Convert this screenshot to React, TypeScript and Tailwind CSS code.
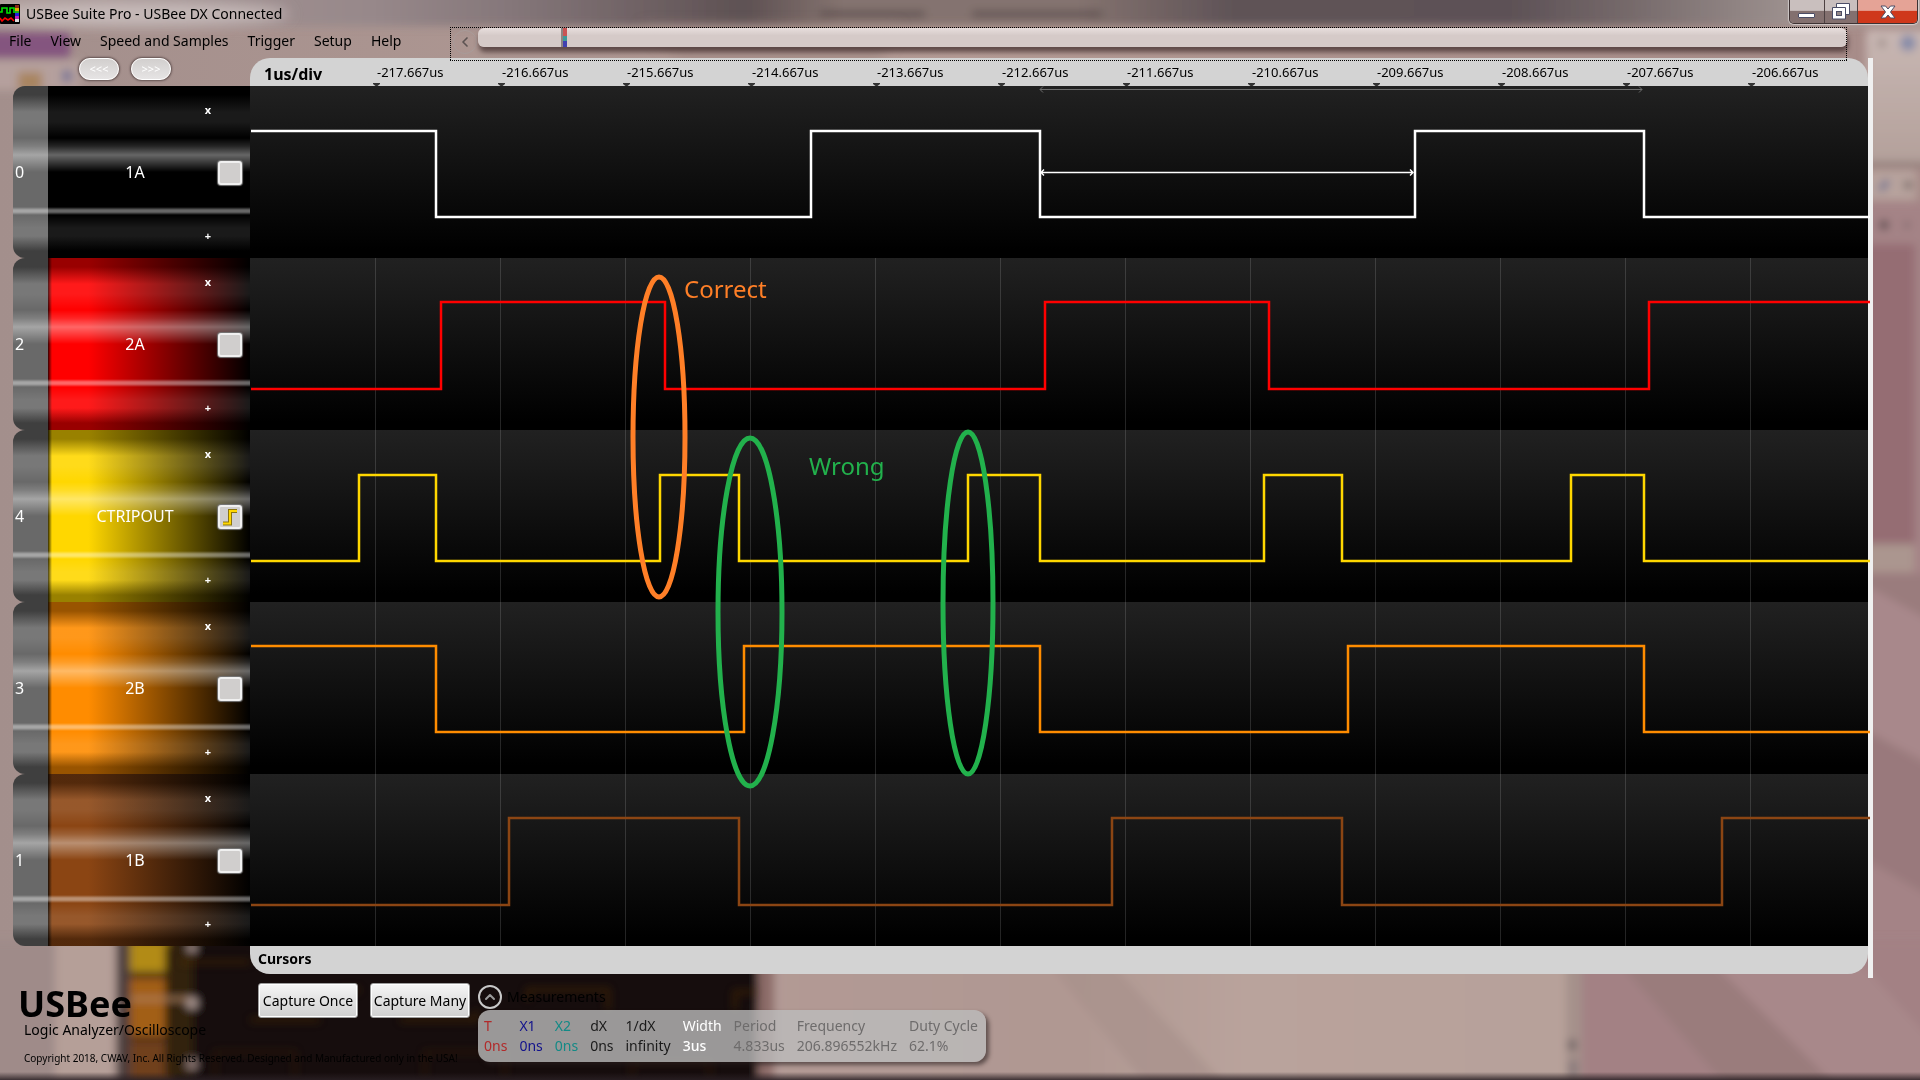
import { ChevronLeft, ChevronUp } from "lucide-react";

type Channel = {
  pin: number;
  name: string;
  fill: string;
  color: string;
  high: number;
  low: number;
  startsHigh: boolean;
  edges: number[];
  trigger?: boolean;
};

const PLOT_WIDTH = 1618;
const ROW_HEIGHT = 172;

const channels: Channel[] = [
  {
    pin: 0,
    name: "1A",
    fill: "from-black",
    color: "#ffffff",
    high: 45,
    low: 131,
    startsHigh: true,
    edges: [186, 561, 790, 1165, 1394],
  },
  {
    pin: 2,
    name: "2A",
    fill: "from-[#ff0000]",
    color: "#ff0000",
    high: 44,
    low: 131,
    startsHigh: false,
    edges: [191, 415, 795, 1019, 1399],
  },
  {
    pin: 4,
    name: "CTRIPOUT",
    fill: "from-[#ffd700]",
    color: "#ffd700",
    high: 45,
    low: 131,
    startsHigh: false,
    edges: [109, 186, 410, 489, 718, 790, 1014, 1092, 1321, 1394],
    trigger: true,
  },
  {
    pin: 3,
    name: "2B",
    fill: "from-[#ff8c00]",
    color: "#ff8c00",
    high: 44,
    low: 130,
    startsHigh: true,
    edges: [186, 494, 790, 1098, 1394],
  },
  {
    pin: 1,
    name: "1B",
    fill: "from-[#8b4513]",
    color: "#8b4513",
    high: 44,
    low: 131,
    startsHigh: false,
    edges: [259, 489, 862, 1092, 1472],
  },
];

const ticks = [
  "-217.667us",
  "-216.667us",
  "-215.667us",
  "-214.667us",
  "-213.667us",
  "-212.667us",
  "-211.667us",
  "-210.667us",
  "-209.667us",
  "-208.667us",
  "-207.667us",
  "-206.667us",
];

const measurements = [
  { label: "T", value: "0ns", style: "text-[#b22a2a]" },
  { label: "X1", value: "0ns", style: "text-[#12128c]" },
  { label: "X2", value: "0ns", style: "text-[#138a86]" },
  { label: "dX", value: "0ns", style: "text-[#1a1a1a]" },
  { label: "1/dX", value: "infinity", style: "text-[#1a1a1a]" },
  { label: "Width", value: "3us", style: "text-white font-medium" },
  { label: "Period", value: "4.833us", style: "text-[#6e6c6c]" },
  { label: "Frequency", value: "206.896552kHz", style: "text-[#6e6c6c]" },
  { label: "Duty Cycle", value: "62.1%", style: "text-[#6e6c6c]" },
];

function wavePath({ high, low, startsHigh, edges }: Channel) {
  let level = startsHigh ? high : low;
  let d = `M1 ${level}`;
  for (const x of edges) {
    level = level === high ? low : high;
    d += `H${x}V${level}`;
  }
  return `${d}H1620`;
}

/* Blurred glass showing the desktop behind the window */
function Backdrop() {
  return (
    <svg
      className="absolute inset-0 h-full w-full"
      viewBox="0 0 1920 1080"
      preserveAspectRatio="none"
      aria-hidden="true"
    >
      <defs>
        <linearGradient id="glass" x1="0" x2="1" y1="0" y2="0">
          <stop offset="0" stopColor="#a38f8c" />
          <stop offset="0.5" stopColor="#b59c96" />
          <stop offset="1" stopColor="#a68b88" />
        </linearGradient>
        <linearGradient id="titlebar" x1="0" x2="1" y1="0" y2="0">
          <stop offset="0" stopColor="#ad9c9a" />
          <stop offset="0.2" stopColor="#97888a" />
          <stop offset="0.27" stopColor="#85777a" />
          <stop offset="0.39" stopColor="#5e5153" />
          <stop offset="0.44" stopColor="#84736f" />
          <stop offset="0.56" stopColor="#84736f" />
          <stop offset="0.64" stopColor="#5f5357" />
          <stop offset="0.78" stopColor="#5d5156" />
          <stop offset="0.84" stopColor="#75696a" />
          <stop offset="0.95" stopColor="#a99d9a" />
          <stop offset="1" stopColor="#b5a5a1" />
        </linearGradient>
        <linearGradient id="rightEdge" x1="0" x2="0" y1="0" y2="1">
          <stop offset="0" stopColor="#c8b7b3" />
          <stop offset="1" stopColor="#b3a09a" />
        </linearGradient>
        <linearGradient id="tan" x1="0" x2="1" y1="0" y2="0">
          <stop offset="0" stopColor="#b29a95" />
          <stop offset="0.4" stopColor="#b09892" />
          <stop offset="0.6" stopColor="#b9a39c" />
          <stop offset="1" stopColor="#b7a19a" />
        </linearGradient>
        <linearGradient id="bottomEdge" x1="0" x2="0" y1="0" y2="1">
          <stop offset="0" stopColor="#2a2024" stopOpacity="0" />
          <stop offset="1" stopColor="#2a2024" stopOpacity="0.85" />
        </linearGradient>
        <filter id="soft">
          <feGaussianBlur stdDeviation="4" />
        </filter>
        <filter id="softer" x="-20%" y="-20%" width="140%" height="140%">
          <feGaussianBlur stdDeviation="7" />
        </filter>
      </defs>
      <rect width="1920" height="1080" fill="url(#glass)" />
      <g filter="url(#soft)">
        <rect x="-20" y="-20" width="1960" height="46" fill="url(#titlebar)" />
        <rect x="820" y="11" width="105" height="6" fill="#4f4344" opacity="0.7" />
        <rect x="972" y="11" width="130" height="6" fill="#4f4344" opacity="0.7" />
        <rect x="-20" y="32" width="90" height="26" fill="#84557f" />
        <rect x="-20" y="60" width="100" height="30" fill="#b5a09d" />
        <rect x="18" y="72" width="24" height="18" fill="#a98561" />
        <rect x="62" y="70" width="10" height="12" fill="#7d7896" />
      </g>
      <g filter="url(#softer)">
        <ellipse cx="140" cy="14" rx="150" ry="12" fill="#d2c7c5" opacity="0.75" />
        <path d="M640 26h260l-20 34h-200z" fill="#9d8580" opacity="0.6" />
      </g>
      <g filter="url(#soft)">
        <rect x="1866" y="30" width="70" height="136" fill="url(#rightEdge)" />
        <circle cx="1908" cy="43" r="8" fill="#8389a8" />
        <circle cx="1882" cy="43" r="4" fill="#998985" />
        <rect x="1866" y="162" width="70" height="5" fill="#8d7976" />
        <rect x="1866" y="170" width="50" height="30" fill="#b7a39d" />
        <path d="M1880 190l8-9" stroke="#6f7191" strokeWidth="6" />
        <circle cx="1908" cy="185" r="4" fill="#6d605d" />
        <rect x="1866" y="202" width="70" height="900" fill="#a48386" />
        <circle cx="1884" cy="225" r="5" fill="#5f4d50" />
        <circle cx="1907" cy="225" r="4" fill="#8b7074" />
        <rect x="1860" y="244" width="55" height="300" fill="#956d73" />
        <path d="M1860 574h76v50l-76-42z" fill="#9a7b7d" />
        <rect x="1860" y="544" width="54" height="28" fill="#ab968f" />
        <path d="M1860 582l76 42v140l-76-34z" fill="#a8888b" />
        <path d="M1866 730l70 40v130l-70-40z" fill="#99797c" />
      </g>
      <g filter="url(#soft)">
        <rect x="-20" y="940" width="75" height="160" fill="#9f8b89" />
        <rect x="55" y="940" width="62" height="160" fill="#b59f98" />
        <rect x="750" y="940" width="830" height="160" fill="url(#tan)" />
        <path d="M1030 940h60l140 150h-80z" fill="#a8918b" opacity="0.7" />
        <rect x="1566" y="950" width="16" height="140" fill="#a5918b" />
        <rect x="1568" y="1040" width="8" height="10" fill="#6c6062" />
        <rect x="1569" y="1060" width="8" height="18" fill="#857779" />
        <rect x="1582" y="940" width="360" height="160" fill="#a38184" />
        <path d="M1600 940h90l150 150h-110z" fill="#9a7b7c" />
        <path d="M1690 940h150l100 110v50h-90z" fill="#a8888a" />
        <rect x="752" y="960" width="22" height="130" fill="#8c6c68" />
        <rect x="116" y="930" width="642" height="170" fill="#120e0f" />
        <rect x="116" y="930" width="14" height="170" fill="#4c3d3d" />
        <rect x="130" y="940" width="40" height="32" fill="#b28b18" />
        <rect x="130" y="978" width="40" height="58" fill="#a25f17" />
        <rect x="130" y="1040" width="40" height="50" fill="#70411f" />
        <path d="M165 944h28v134h-28z" fill="#33200f" />
        <path d="M130 999h60" stroke="#b58a66" strokeWidth="3" />
        <circle cx="192" cy="948" r="5" fill="#a08b86" />
        <circle cx="192" cy="1003" r="6" fill="#a99590" />
        <circle cx="192" cy="1064" r="6" fill="#8b7773" />
      </g>
      <g filter="url(#soft)" stroke="#55300e" strokeWidth="4" fill="none" opacity="0.6">
        <path d="M180 962h70M340 990h20M250 1020h70M400 1020h76V1010M528 1000v-10h80v20M735 1010v-18h20" />
        <path d="M215 1078v-26h80v26M425 1078v-26h80v26M632 1078v-16h78v16" opacity="0.5" />
      </g>
      <rect y="1072" width="1920" height="8" fill="url(#bottomEdge)" />
    </svg>
  );
}

function AppIcon() {
  return (
    <svg className="h-5 w-5 shrink-0" viewBox="0 0 20 20" aria-hidden="true">
      <rect width="20" height="20" rx="1" fill="#000" />
      <path d="M0 8h2V4h5v5h3V4h4v5" stroke="#00e000" strokeWidth="1.6" fill="none" />
      <path d="M0 14l2 3 3-3 3 2 3-2 3 3" stroke="#f00" strokeWidth="1.6" fill="none" />
      <rect x="15" y="1" width="4" height="3" fill="#8b2a1a" />
      <rect x="15" y="4" width="4" height="3" fill="#e0b000" />
      <rect x="15" y="7" width="4" height="2" fill="#20b020" />
      <rect x="15" y="9" width="4" height="3" fill="#2020e0" />
      <rect x="15" y="12" width="4" height="3" fill="#c020c0" />
      <rect x="15" y="15" width="4" height="3" fill="#ddd" />
    </svg>
  );
}

function TitleBar() {
  return (
    <header className="flex h-[27px] items-start justify-between">
      <div className="flex h-[27px] items-center gap-[6px]">
        <AppIcon />
        <h1 className="text-sm">USBee Suite Pro - USBee DX Connected</h1>
      </div>
      <div className="mr-[2px] flex h-6 overflow-hidden rounded-b-[5px] border border-t-0 border-[#3d3233] shadow-[0_0_1px_1px_rgba(255,255,255,0.5)]">
        <button
          aria-label="Minimize"
          className="flex w-[35px] items-center justify-center border-r border-[#4d4142] bg-linear-to-b/srgb from-[#c9bfbe] from-45% to-[#83706f] to-50% pt-2"
        >
          <svg className="h-[6px] w-[18px]" viewBox="0 0 18 6">
            <rect x="0.5" y="0.5" width="16" height="4" rx="0.5" fill="#fff" stroke="#4b4d66" />
          </svg>
        </button>
        <button
          aria-label="Restore"
          className="flex w-[33px] items-center justify-center border-r border-[#4d4142] bg-linear-to-b/srgb from-[#c9bfbe] from-45% to-[#83706f] to-50%"
        >
          <svg className="h-[17px] w-[18px]" viewBox="0 0 18 17">
            <path d="M4.500 0.500h13v11h-13z" fill="#fff" stroke="#4b4d66" />
            <path d="M0.500 4.500h13v11.500h-13z" fill="#fff" stroke="#4b4d66" />
            <rect x="4.500" y="8.500" width="5" height="4" fill="#948887" stroke="#4b4d66" />
          </svg>
        </button>
        <button
          aria-label="Close"
          className="flex w-[59px] items-center justify-center bg-linear-to-b/srgb from-[#e5a396] from-45% to-[#cf381b] to-50%"
        >
          <svg className="h-[14px] w-[16px]" viewBox="0 0 16 14">
            <path
              d="M1 1h4.500l2.500 3 2.500-3h4.500l-4.500 6 4.500 6h-4.500l-2.500-3-2.500 3h-4.500l4.500-6z"
              fill="#fff"
              stroke="#4b4d66"
            />
          </svg>
        </button>
      </div>
    </header>
  );
}

function MenuBar() {
  return (
    <div className="relative z-20 flex h-[31px] items-start">
      <nav className="flex h-7 w-[450px] shrink-0 items-center gap-[19px] pl-[9px] text-sm">
        <button>File</button>
        <button>View</button>
        <button>Speed and Samples</button>
        <button>Trigger</button>
        <button>Setup</button>
        <button>Help</button>
      </nav>
      {/* Sample buffer scroller */}
      <div className="relative mr-[73px] flex h-[34px] flex-1 items-start pt-px pl-[3px]">
        <button
          aria-label="Scroll left"
          className="mt-[2px] flex h-6 w-6 shrink-0 items-center justify-center rounded-full border border-[#a89b99] text-[#5c5352]"
        >
          <ChevronLeft className="h-4 w-4" strokeWidth={2.5} />
        </button>
        <div className="ml-[1px] flex h-[19px] flex-1 rounded-md bg-linear-to-b/srgb from-[#e8dedd] to-[#d5cac8] to-40% pl-[83px] shadow-[1px_5px_5px_rgba(60,40,40,0.7)]">
          <div className="w-[2px] bg-[#8d8483]" />
          <div className="flex w-1 flex-col">
            <div className="flex-1 bg-[#c95555]" />
            <div className="h-[5px] bg-[#3d9a9a]" />
            <div className="h-[6px] bg-[#4040b0]" />
          </div>
        </div>
        {/* Focus rectangle */}
        <div className="pointer-events-none absolute inset-x-0 top-0 h-px bg-[repeating-linear-gradient(90deg,#000_0_1px,transparent_1px_2px)]" />
        <div className="pointer-events-none absolute inset-x-0 bottom-0 h-px bg-[repeating-linear-gradient(90deg,#000_0_1px,transparent_1px_2px)]" />
        <div className="pointer-events-none absolute inset-y-0 left-0 w-px bg-[repeating-linear-gradient(180deg,#000_0_1px,transparent_1px_2px)]" />
        <div className="pointer-events-none absolute inset-y-0 right-0 w-px bg-[repeating-linear-gradient(180deg,#000_0_1px,transparent_1px_2px)]" />
      </div>
    </div>
  );
}

function ChannelLabel({ channel }: { channel: Channel }) {
  return (
    <div className="relative flex h-[172px] overflow-hidden rounded-l-xl bg-[#696969] text-white">
      <div className="w-[35px]" />
      <div className={`flex-1 bg-linear-to-r/srgb ${channel.fill} from-20% to-black`}>
        <div className="h-full w-1 bg-linear-to-r from-black/80 to-transparent" />
      </div>
      {/* Gloss */}
      <div className="absolute inset-0 bg-[linear-gradient(to_bottom,rgba(0,0,0,0.4)_0px,rgba(0,0,0,0.4)_9px,rgba(255,255,255,0.1)_26px,rgba(255,255,255,0.1)_36px,rgba(255,255,255,0)_52px,rgba(255,255,255,0.14)_60px,rgba(255,255,255,0.4)_69px,rgba(255,255,255,0)_86px,rgba(255,255,255,0)_121px,rgba(255,255,255,0.4)_124px,rgba(255,255,255,0.4)_126px,rgba(255,255,255,0)_129px,rgba(255,255,255,0.1)_142px,rgba(255,255,255,0.1)_150px,rgba(0,0,0,0.4)_165px,rgba(0,0,0,0.4)_172px)]" />
      <div className="absolute inset-0 grid grid-cols-[35px_1fr_52px] items-center text-base">
        <span className="pl-[2px]">{channel.pin}</span>
        <span className="pl-6 text-center">{channel.name}</span>
        <div className="flex h-full flex-col items-start justify-between pt-4 pb-[14px] text-[11px] leading-4 font-bold">
          <button aria-label={`Remove ${channel.name}`} className="w-5">
            x
          </button>
          <button
            aria-label={`Trigger on ${channel.name}`}
            className="ml-5 flex h-6 w-6 items-center justify-center rounded-[3px] border-2 border-[#f0f0f0] bg-[#d0cecd] shadow-[0_0_1px_1px_#777]"
          >
            {channel.trigger && (
              <svg className="h-[18px] w-[18px]" viewBox="0 0 18 18">
                <path d="M2 15.500h7V3h7" stroke="#8a7410" strokeWidth="4" fill="none" />
                <path d="M2 15.500h7V3h7" stroke="#ffd700" strokeWidth="2" fill="none" />
              </svg>
            )}
          </button>
          <button aria-label={`Add below ${channel.name}`} className="w-5">
            +
          </button>
        </div>
      </div>
    </div>
  );
}

function Waveform({ channel, grid }: { channel: Channel; grid: boolean }) {
  return (
    <svg
      className="block h-[172px] w-full overflow-visible bg-linear-to-b/srgb from-[#212121] to-black to-95%"
      viewBox={`0 0 ${PLOT_WIDTH} ${ROW_HEIGHT}`}
      preserveAspectRatio="none"
    >
      {grid &&
        ticks.map((tick, i) => (
          <path key={tick} d={`M${125.5 + i * 125} 0V172`} stroke="#fff" strokeOpacity="0.14" />
        ))}
      <path d={wavePath(channel)} fill="none" stroke={channel.color} strokeWidth="2.5" />
    </svg>
  );
}

/* Pulse width and period arrows, drawn over the first channel */
function MeasureArrows() {
  return (
    <svg
      className="absolute inset-x-0 top-0 h-[172px] w-full"
      viewBox={`0 0 ${PLOT_WIDTH} ${ROW_HEIGHT}`}
      preserveAspectRatio="none"
      fill="none"
    >
      <path d="M790 3.500H1392M793 0.500l-3 3 3 3M1389 0.500l3 3-3 3" stroke="#6e6e6e" />
      <path d="M791 86.500H1163M794 83.500l-3 3 3 3M1160 83.500l3 3-3 3" stroke="#fff" strokeWidth="1.4" />
    </svg>
  );
}

function Annotations() {
  return (
    <svg
      className="absolute inset-0 h-full w-full"
      viewBox="0 0 1618 860"
      preserveAspectRatio="none"
      fill="none"
      strokeWidth="5"
      fontFamily="'Noto Sans', sans-serif"
      fontSize="24"
    >
      <ellipse cx="409" cy="351" rx="26" ry="160" stroke="#ff7f27" />
      <ellipse cx="500" cy="526" rx="32" ry="174" stroke="#22b14c" />
      <ellipse cx="718" cy="517" rx="25" ry="171" stroke="#22b14c" />
      <text x="434" y="212" fill="#ff7f27" stroke="none">
        Correct
      </text>
      <text x="559" y="389" fill="#22b14c" stroke="none">
        Wrong
      </text>
    </svg>
  );
}

function Ruler() {
  return (
    <div className="grid h-7 grid-cols-[repeat(12,125fr)_118fr] items-center rounded-t-[20px] bg-[#d3d3d3]">
      <span className="pt-1 pl-[14px] text-base leading-6 font-bold">1us/div</span>
      {ticks.map((tick) => (
        <div key={tick} className="relative flex h-full min-w-0 items-center pt-[2px] pl-[2px] text-[13px]">
          {tick}
          <svg className="absolute bottom-0 -left-[2px] h-[3px] w-[7px]" viewBox="0 0 7 3">
            <path d="M0 0h7v1L4.500 3h-2L0 1z" fill="#333" />
          </svg>
        </div>
      ))}
    </div>
  );
}

function Footer() {
  return (
    <footer className="flex flex-1 items-start">
      <div className="w-[258px] shrink-0 pt-3 pl-[18px] whitespace-nowrap">
        <p className="text-4xl leading-9 font-bold">USBee</p>
        <p className="pl-[6px] text-sm leading-4">Logic Analyzer/Oscilloscope</p>
        <p className="pt-3 pl-[6px] text-[10px] leading-4">
          Copyright 2018, CWAV, Inc. All Rights Reserved. Designed and Manufactured only in the USA!
        </p>
      </div>
      <div className="flex gap-3 pt-[9px] text-sm">
        {["Capture Once", "Capture Many"].map((label) => (
          <button
            key={label}
            className="h-[35px] w-[100px] rounded-[3px] border border-[#9c9c9c] bg-linear-to-b/srgb from-[#f6f6f6] to-[#cfcfcf] whitespace-nowrap shadow-[inset_0_0_0_1px_#fff]"
          >
            {label}
          </button>
        ))}
      </div>
      <div className="pt-[10px] pl-2 text-sm">
        <div className="flex h-[26px] items-center gap-[5px]">
          <button
            aria-label="Collapse measurements"
            className="flex h-6 w-6 items-center justify-center rounded-full border-2 border-[#c8c8c8] text-[#9a9a9a]"
          >
            <ChevronUp className="h-4 w-4" strokeWidth={3} />
          </button>
          <h2>Measurements</h2>
        </div>
        <div className="h-[52px] rounded-xl bg-[#bbbbbb]/80 pt-[6px] pr-2 pl-[6px] shadow-[3px_3px_4px_rgba(40,30,30,0.6)]">
          <table className="text-left leading-5 whitespace-nowrap">
            <thead>
              <tr>
                {measurements.map(({ label, style }) => (
                  <th key={label} className={`p-0 pr-3 font-normal last:pr-0 ${style}`}>
                    {label}
                  </th>
                ))}
              </tr>
            </thead>
            <tbody>
              <tr>
                {measurements.map(({ label, value, style }) => (
                  <td key={label} className={`p-0 pr-3 last:pr-0 ${style}`}>
                    {value}
                  </td>
                ))}
              </tr>
            </tbody>
          </table>
        </div>
      </div>
    </footer>
  );
}

export default function App() {
  return (
    <div className="relative min-h-screen overflow-hidden bg-[#a38f8c] font-['Noto_Sans',sans-serif] text-black">
      <Backdrop />
      <div className="relative flex min-h-screen flex-col">
        <TitleBar />
        <MenuBar />
        <main className="flex">
          <div className="w-[250px] shrink-0 pl-[13px]">
            <div className="flex h-7 gap-3 pl-[66px]">
              {["<<<", ">>>"].map((label) => (
                <button
                  key={label}
                  className="h-[22px] w-10 rounded-full border border-white bg-linear-to-b/srgb from-[#d2cfce] to-[#e6e4e4] text-[11px] text-white shadow-[0_0_2px_1px_rgba(70,55,55,0.7)]"
                >
                  {label}
                </button>
              ))}
            </div>
            {channels.map((channel) => (
              <ChannelLabel key={channel.pin} channel={channel} />
            ))}
          </div>
          <div className="relative z-10 min-w-0 flex-1">
            <Ruler />
            <div className="relative">
              {channels.map((channel, i) => (
                <Waveform key={channel.pin} channel={channel} grid={i > 0} />
              ))}
              <MeasureArrows />
              <Annotations />
            </div>
            <div className="h-7 rounded-b-[20px] bg-[#d3d3d3] pl-2 text-sm leading-[26px] font-bold">
              Cursors
            </div>
          </div>
          <div className="mr-[47px] -mb-1 w-[5px] bg-[#f0f0f0]" />
        </main>
        <Footer />
      </div>
    </div>
  );
}
